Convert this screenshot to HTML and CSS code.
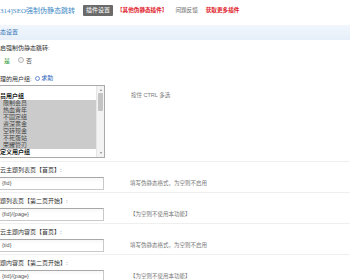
FILE: index.html
```html
<!DOCTYPE html>
<html lang="zh">
<head>
<meta charset="utf-8">
<title>SEO强制伪静态跳转</title>
<link rel="stylesheet" href="styles.css">
</head>
<body>
<div class="page">
  <div class="topbar">
    <span class="title">314]SEO强制伪静态跳转</span>
    <span class="badge">插件设置</span>
    <span class="link red">【其他伪静态插件】</span>
    <span class="link gray">问题反馈</span>
    <span class="link red">获取更多插件</span>
  </div>
  <div class="band">态设置</div>

  <div class="field">
    <div class="label">启强制伪静态跳转:</div>
    <div class="radios">
      <span class="yes">是</span>
      <span class="radio"></span>
      <span class="no">否</span>
    </div>
  </div>

  <div class="field groups">
    <div class="label">理的用户组: <span class="help"><span class="help-icon"></span>求助</span></div>
    <div class="row">
      <div class="listbox">
        <div class="items">
          <div class="grp">员用户组</div>
          <div class="opt sel">限制会员</div>
          <div class="opt sel">热血青年</div>
          <div class="opt sel">不固定组</div>
          <div class="opt sel">资深黄金</div>
          <div class="opt sel">空转现金</div>
          <div class="opt sel">不死蛋站</div>
          <div class="opt sel">荣耀管刃</div>
          <div class="grp">定义用户组</div>
        </div>
        <div class="scroll">
          <span class="arrow up"></span>
          <span class="thumb"></span>
          <span class="arrow down"></span>
        </div>
      </div>
      <div class="hint top">按住 CTRL 多选</div>
    </div>
  </div>

  <div class="section">
    <div class="label">云主题列表页【首页】:</div>
    <div class="row">
      <div class="input">{fid}</div>
      <div class="hint">填写伪静态格式，为空则不启用</div>
    </div>
  </div>
  <div class="section">
    <div class="label">题列表页【第二页开始】:</div>
    <div class="row">
      <div class="input">{fid}/{page}</div>
      <div class="hint">【为空则不使用本功能】</div>
    </div>
  </div>
  <div class="section">
    <div class="label">云主题内容页【首页】:</div>
    <div class="row">
      <div class="input">{tid}</div>
      <div class="hint">填写伪静态格式，为空则不启用</div>
    </div>
  </div>
  <div class="section">
    <div class="label">题内容页【第二页开始】:</div>
    <div class="row">
      <div class="input">{tid}/{page}</div>
      <div class="hint">【为空则不使用本功能】</div>
    </div>
  </div>
</div>
</body>
</html>
```
FILE: styles.css
```css
html, body {
  margin: 0;
  padding: 0;
  background: #fff;
}
body {
  font-family: "Liberation Sans", "Noto Sans CJK SC", sans-serif;
  font-size: 6px;
  color: #333;
  overflow: hidden;
}
.page {
  width: 350px;
}
.topbar {
  display: flex;
  align-items: center;
  height: 20px;
  white-space: nowrap;
}
.title {
  font-family: "Liberation Serif", "Noto Sans CJK SC", serif;
  font-size: 7px;
  color: #3f8ac6;
  width: 83px;
}
.badge {
  background: #6a6a6a;
  color: #fff;
  font-size: 6px;
  line-height: 11px;
  padding: 0 3px;
  border-radius: 1px;
  margin-right: 4px;
}
.link {
  font-size: 5.6px;
  margin-right: 8px;
}
.red {
  color: #e0202a;
  font-weight: bold;
}
.gray {
  color: #666;
}
.band {
  margin-top: 5px;
  height: 15px;
  line-height: 15px;
  background: linear-gradient(#f1f6fc, #e6eff9);
  color: #2f73b3;
  font-size: 6px;
}
.label {
  line-height: 10px;
  color: #333;
  white-space: nowrap;
}
.field {
  padding-top: 3px;
}
.radios {
  display: flex;
  align-items: center;
  height: 14px;
  padding-left: 4px;
}
.yes {
  color: #2a9a34;
  margin-right: 8px;
}
.radio {
  width: 4px;
  height: 4px;
  border: 1px solid #b8b8b8;
  border-radius: 50%;
  background: #f4f4f4;
  margin-right: 2px;
}
.no {
  color: #555;
}
.groups {
  margin-top: 3px;
  padding-top: 3px;
}
.help {
  color: #2b63b8;
  margin-left: 2px;
  display: inline-flex;
  align-items: center;
}
.help-icon {
  width: 3px;
  height: 3px;
  border: 1px solid #6b8fd6;
  border-radius: 50%;
  margin-right: 1px;
}
.row {
  display: flex;
  align-items: center;
}
.groups .row {
  align-items: flex-start;
  margin-top: 1px;
  margin-bottom: 3px;
}
.listbox {
  width: 104px;
  height: 71px;
  border: 1px solid #a9a9a9;
  border-left: none;
  display: flex;
  background: #fff;
}
.items {
  flex: 1;
  padding-top: 7px;
}
.grp, .opt {
  height: 7px;
  line-height: 7px;
  color: #222;
  white-space: nowrap;
}
.grp {
  font-weight: bold;
}
.opt {
  padding-left: 3px;
}
.sel {
  background: #cbcbcb;
  color: #444;
}
.scroll {
  width: 7px;
  background: #f3f3f3;
  border-left: 1px solid #e6e6e6;
  display: flex;
  flex-direction: column;
  align-items: center;
}
.arrow {
  width: 0;
  height: 0;
  border-left: 1.5px solid transparent;
  border-right: 1.5px solid transparent;
  margin: 3px 0 2px;
}
.arrow.up {
  border-bottom: 2px solid #888;
}
.arrow.down {
  border-top: 2px solid #888;
  margin-top: auto;
  margin-bottom: 3px;
}
.thumb {
  width: 5px;
  height: 18px;
  background: #c4c4c4;
  border-radius: 1px;
}
.hint {
  margin-left: 26px;
  color: #777;
  font-size: 5.5px;
  white-space: nowrap;
}
.hint.top {
  margin-top: 6px;
}
.section {
  border-top: 1px solid #efefef;
  padding-top: 3px;
  padding-bottom: 2px;
}
.section .row {
  margin-top: 2px;
}
.input {
  width: 101px;
  height: 11px;
  line-height: 11px;
  padding-left: 2px;
  border: 1px solid #c9c9c9;
  border-left: none;
  border-top-color: #a8a8a8;
  background: linear-gradient(#f7f7f7, #fff 40%);
  color: #555;
  font-size: 5.5px;
}
```
